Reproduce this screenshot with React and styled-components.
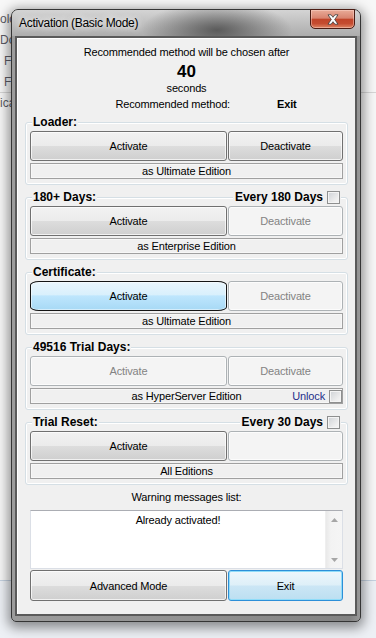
import React from 'react'
import styled, { createGlobalStyle, css } from 'styled-components'

const GlobalStyle = createGlobalStyle`
  html, body {
    margin: 0;
    padding: 0;
  }
  body {
    width: 376px;
    height: 638px;
    overflow: hidden;
    font-family: "Liberation Sans", Arial, sans-serif;
    background: #f6f6f6;
  }
  * {
    box-sizing: border-box;
  }
`

const Desktop = styled.div`
  position: relative;
  width: 376px;
  height: 638px;
  overflow: hidden;
  display: flex;
  flex-direction: column;
`

const BackList = styled.div`
  flex: 0 0 580px;
  padding-top: 9px;
  background: #f7f7f7;
`

const BackRow = styled.div`
  height: 21px;
  line-height: 21px;
  font-size: 12px;
  color: #5c5c66;
  padding-left: ${p => p.$indent}px;
  border-bottom: 1px solid ${p => (p.$sep ? '#d6d6d6' : 'transparent')};
  white-space: nowrap;
`

const BottomBand = styled.div`
  flex: 1;
  background: #edf0f5;
  border-top: 1px solid #c4d1e0;
`

const Window = styled.div`
  position: absolute;
  left: 11px;
  top: 9px;
  width: 350px;
  border: 1px solid #353535;
  border-radius: 7px 7px 5px 5px;
  background: linear-gradient(90deg, #9c9c9c, #929292 50%, #828282 97%, #989898);
  padding: 0 3px 5px;
  box-shadow: 0 3px 12px 3px rgba(0, 0, 0, 0.42);
`

const TitleBar = styled.div`
  height: 26px;
  margin: 0 -3px;
  padding-left: 7px;
  display: flex;
  align-items: flex-start;
  justify-content: space-between;
  border-radius: 6px 6px 0 0;
  background:
    radial-gradient(ellipse 75px 28px at 205px 20px, rgba(60, 60, 60, 0.75), rgba(60, 60, 60, 0) 100%),
    linear-gradient(180deg, #d4d4d4, #bcbcbc 60%, #adadad);
`

const Caption = styled.div`
  font-size: 12px;
  letter-spacing: -0.3px;
  line-height: 26px;
  color: #000;
  text-shadow: 0 0 6px rgba(255, 255, 255, 0.95), 0 0 10px rgba(255, 255, 255, 0.8);
`

const CloseButton = styled.div`
  width: 45px;
  height: 20px;
  margin-top: -1px;
  margin-right: 5px;
  border: 1px solid #4b1c13;
  border-radius: 0 0 5px 5px;
  display: flex;
  align-items: center;
  justify-content: center;
  background: linear-gradient(180deg, #e9ab98 0%, #d88470 45%, #c1452a 52%, #c54c30 75%, #de8563 100%);
  box-shadow: inset 0 0 0 1px rgba(255, 220, 210, 0.45);
`

const Client = styled.div`
  background: #f0f0f0;
  border: 2px solid #5a5a5a;
  box-shadow: inset 1px 1px 0 #fff;
  padding: 7px 7px 13px 8px;
  display: flex;
  flex-direction: column;
  font-size: 11px;
  letter-spacing: -0.15px;
  color: #000;
`

const Notice = styled.div`
  text-align: center;
  line-height: 14px;
`

const Countdown = styled.div`
  text-align: center;
  font-size: 17px;
  font-weight: bold;
  line-height: 20px;
  margin-top: 3px;
  letter-spacing: 0;
`

const Seconds = styled.div`
  text-align: center;
  line-height: 13px;
`

const MethodRow = styled.div`
  display: grid;
  grid-template-columns: 205px auto;
  column-gap: 47px;
  margin-top: 3px;
  line-height: 13px;
`

const MethodLabel = styled.span`
  text-align: right;
`

const MethodValue = styled.span`
  font-weight: bold;
`

const Groups = styled.div`
  display: flex;
  flex-direction: column;
  gap: 12px;
  margin-top: 11px;
`

const Group = styled.section`
  border: 1px solid #d5dfe5;
  border-radius: 3px;
  box-shadow: inset 0 0 0 1px #fff;
  padding: 0 4px 5px;
`

const GroupHeader = styled.div`
  display: flex;
  align-items: center;
  justify-content: space-between;
  height: 14px;
  margin: -8px 2px 2px 2px;
`

const GroupTitle = styled.span`
  background: #f0f0f0;
  padding: 0 1px;
  font-size: 12px;
  font-weight: bold;
  letter-spacing: 0;
  line-height: 14px;
`

const HeaderOption = styled.label`
  display: flex;
  align-items: center;
  gap: 4px;
  background: #f0f0f0;
  padding: 0 1px 0 2px;
  font-size: 12px;
  font-weight: bold;
  letter-spacing: 0;
`

const CheckBox = styled.span`
  display: inline-block;
  flex: 0 0 13px;
  width: 13px;
  height: 13px;
  border: 1px solid #8e8f8f;
  background: linear-gradient(135deg, #cfd2d6, #eeeeee 70%, #f6f6f6);
  box-shadow: inset 0 0 0 1px #f4f4f4;
`

const ButtonRow = styled.div`
  display: flex;
  gap: 1px;
  height: ${p => p.$height || 30}px;
`

const variants = {
  normal: css`
    border: 1px solid #707070;
    color: #000;
    background: linear-gradient(180deg, #f2f2f2 0%, #ebebeb 50%, #dddddd 50%, #cfcfcf 100%);
    box-shadow: inset 0 0 0 1px rgba(255, 255, 255, 0.7);
  `,
  disabled: css`
    border: 1px solid #adb2b5;
    color: #838383;
    background: #f4f4f4;
    box-shadow: inset 0 0 0 1px #fcfcfc;
  `,
  hot: css`
    border: 1px solid #151515;
    border-radius: 9px / 4px;
    color: #000;
    background: linear-gradient(180deg, #eaf6fd 0%, #d9f0fc 45%, #bee6fd 50%, #a7d9f5 100%);
    box-shadow: inset 0 0 0 1px rgba(255, 255, 255, 0.5);
  `,
  primary: css`
    border: 1px solid #2c8fd8;
    color: #000;
    background: linear-gradient(180deg, #edf6fc 0%, #deeff8 48%, #cbe6f5 52%, #bcdff1 100%);
    box-shadow: inset 0 0 0 1px #8fdcf9;
  `,
}

const Button = styled.button`
  flex: ${p => (p.$width ? `0 0 ${p.$width}px` : '1')};
  height: 100%;
  border-radius: 3px;
  font-family: "Liberation Sans", Arial, sans-serif;
  font-size: 11px;
  letter-spacing: -0.15px;
  padding: 0;
  ${p => variants[p.$variant || 'normal']}
`

const Edition = styled.div`
  margin-top: 2px;
  height: 16px;
  border: 1px solid #a0a0a0;
  box-shadow: inset 0 0 0 1px #f7f7f7;
  line-height: 14px;
  display: grid;
  grid-template-columns: 1fr auto 1fr;
  align-items: center;
`

const EditionText = styled.span`
  grid-column: 2;
  text-align: center;
`

const UnlockOption = styled.label`
  grid-column: 3;
  justify-self: end;
  display: flex;
  align-items: center;
  gap: 4px;
  color: #1e2f8a;
`

const Bottom = styled.div`
  padding: 0 5px;
  display: flex;
  flex-direction: column;
`

const WarningLabel = styled.div`
  margin-top: 6px;
  text-align: center;
  line-height: 13px;
`

const MessageBox = styled.div`
  margin-top: 6px;
  height: 59px;
  display: flex;
  background: #fff;
  border: 1px solid #dbdfe6;
  border-top-color: #abadb3;
`

const MessageText = styled.div`
  flex: 1;
  text-align: center;
  padding-top: 3px;
  line-height: 13px;
`

const ScrollBar = styled.div`
  flex: 0 0 17px;
  display: flex;
  flex-direction: column;
  background: linear-gradient(90deg, #e9e9e9, #f3f3f3 30%, #f5f5f5);
  border-left: 1px solid #efefef;
`

const ScrollArrow = styled.div`
  height: 17px;
  display: flex;
  align-items: center;
  justify-content: center;
`

const ScrollTrack = styled.div`
  flex: 1;
`

const Arrow = ({ down }) => (
  <svg width="7" height="4" viewBox="0 0 7 4">
    <path d={down ? 'M0 0h7L3.5 4z' : 'M0 4h7L3.5 0z'} fill="#a6a6a6" />
  </svg>
)

const ActionRow = styled(ButtonRow)`
  margin-top: 1px;
`

const ActivationGroup = ({ title, option, activate = 'normal', deactivate = 'normal', deactivateText = 'Deactivate', activateText = 'Activate', edition, unlock }) => (
  <Group>
    <GroupHeader>
      <GroupTitle>{title}</GroupTitle>
      {option && (
        <HeaderOption>
          {option}
          <CheckBox />
        </HeaderOption>
      )}
    </GroupHeader>
    <ButtonRow>
      <Button $width={197} $variant={activate}>{activateText}</Button>
      <Button $variant={deactivate}>{deactivateText}</Button>
    </ButtonRow>
    <Edition>
      <EditionText>{edition}</EditionText>
      {unlock && (
        <UnlockOption>
          Unlock
          <CheckBox />
        </UnlockOption>
      )}
    </Edition>
  </Group>
)

const backRows = [
  { text: 'olor', indent: 0 },
  { text: 'Docs', indent: 0 },
  { text: 'Files', indent: 4 },
  { text: 'Files', indent: 4, sep: true },
  { text: 'ication', indent: 0 },
]

export default function App() {
  return (
    <>
      <GlobalStyle />
      <Desktop>
        <BackList>
          {backRows.map((r, i) => (
            <BackRow key={i} $indent={r.indent} $sep={r.sep}>{r.text}</BackRow>
          ))}
        </BackList>
        <BottomBand />

        <Window>
          <TitleBar>
            <Caption>Activation (Basic Mode)</Caption>
            <CloseButton>
              <svg width="12" height="11" viewBox="0 0 12 11">
                <path
                  d="M1 0.8h3.1L6 3.3l1.9-2.5H11L7.7 5.5 11 10.2H7.9L6 7.7 4.1 10.2H1l3.3-4.7z"
                  fill="#fff"
                  stroke="#3a3a3a"
                  strokeWidth="0.8"
                  strokeLinejoin="round"
                />
              </svg>
            </CloseButton>
          </TitleBar>

          <Client>
            <Notice>Recommended method will be chosen after</Notice>
            <Countdown>40</Countdown>
            <Seconds>seconds</Seconds>
            <MethodRow>
              <MethodLabel>Recommended method:</MethodLabel>
              <MethodValue>Exit</MethodValue>
            </MethodRow>

            <Groups>
              <ActivationGroup title="Loader:" edition="as Ultimate Edition" />
              <ActivationGroup
                title="180+ Days:"
                option="Every 180 Days"
                deactivate="disabled"
                edition="as Enterprise Edition"
              />
              <ActivationGroup
                title="Certificate:"
                activate="hot"
                deactivate="disabled"
                edition="as Ultimate Edition"
              />
              <ActivationGroup
                title="49516 Trial Days:"
                activate="disabled"
                deactivate="disabled"
                edition="as HyperServer Edition"
                unlock
              />
              <ActivationGroup
                title="Trial Reset:"
                option="Every 30 Days"
                deactivate="disabled"
                deactivateText=""
                edition="All Editions"
              />
            </Groups>

            <Bottom>
              <WarningLabel>Warning messages list:</WarningLabel>
              <MessageBox>
                <MessageText>Already activated!</MessageText>
                <ScrollBar>
                  <ScrollArrow><Arrow /></ScrollArrow>
                  <ScrollTrack />
                  <ScrollArrow><Arrow down /></ScrollArrow>
                </ScrollBar>
              </MessageBox>
              <ActionRow $height={31}>
                <Button $width={197}>Advanced Mode</Button>
                <Button $variant="primary">Exit</Button>
              </ActionRow>
            </Bottom>
          </Client>
        </Window>
      </Desktop>
    </>
  )
}
